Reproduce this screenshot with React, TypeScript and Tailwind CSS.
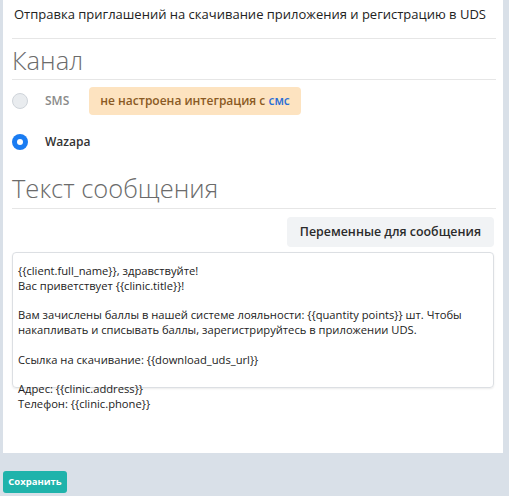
import React, { useState } from 'react';

const messageText = `{{client.full_name}}, здравствуйте!
Вас приветствует {{clinic.title}}!

Вам зачислены баллы в нашей системе лояльности: {{quantity points}} шт. Чтобы накапливать и списывать баллы, зарегистрируйтесь в приложении UDS.

Ссылка на скачивание: {{download_uds_url}}

Адрес: {{clinic.address}}
Телефон: {{clinic.phone}}`;

function Radio({ checked }: { checked: boolean }) {
  return checked ? (
    <span className="w-4 h-4 rounded-full bg-[#1a7cf2] flex items-center justify-center">
      <span className="w-[6px] h-[6px] rounded-full bg-white" />
    </span>
  ) : (
    <span className="w-4 h-4 rounded-full bg-[#e9ecef] border border-[#cfd4da]" />
  );
}

export default function App() {
  const [channel, setChannel] = useState<'sms' | 'wazapa'>('wazapa');

  return (
    <div className="w-[509px] h-[496px] bg-[#d9e0e8] font-['Open_Sans',sans-serif] overflow-hidden">
      {/* Panel */}
      <div className="ml-[3px] w-[500px] h-[453px] bg-white pl-[9px] pr-[7px]">
        <div className="pt-[5px] pl-[2px] text-[13px] leading-[18px] text-[#222]">
          Отправка приглашений на скачивание приложения и регистрацию в UDS
        </div>
        <div className="mt-[15px] border-t border-[#e6e6e6]" />

        <h2 className="mt-[5px] text-[25.5px] leading-[32px] font-light text-[#6b6b6b]">Канал</h2>
        <div className="mt-[3px] border-t border-[#e6e6e6]" />

        {/* Channels */}
        <div className="mt-[7px] flex items-center h-[28px]">
          <button onClick={() => setChannel('sms')} className="flex items-center">
            <Radio checked={channel === 'sms'} />
            <span className="ml-[17px] text-[12px] font-semibold text-[#8a8a8a]">SMS</span>
          </button>
          <div className="ml-[20px] h-[28px] px-[11px] rounded-[4px] bg-[#fde3c0] flex items-center text-[12px] font-semibold text-[#8a5a24]">
            не настроена интеграция с&nbsp;<span className="text-[#2a6fd6]">смс</span>
          </div>
        </div>
        <div className="mt-[19px] flex items-center h-[16px]">
          <button onClick={() => setChannel('wazapa')} className="flex items-center">
            <Radio checked={channel === 'wazapa'} />
            <span className="ml-[17px] text-[12px] font-semibold text-[#333]">Wazapa</span>
          </button>
        </div>

        <h2 className="mt-[22px] text-[25.5px] leading-[32px] font-light text-[#6b6b6b]">Текст сообщения</h2>
        <div className="mt-[4px] border-t border-[#e6e6e6]" />

        <div className="mt-[8px] flex justify-end pr-[2px]">
          <button className="h-[30px] px-[13px] rounded-[4px] bg-[#f1f3f5] text-[12.4px] font-semibold text-[#2b2b2b]">
            Переменные для сообщения
          </button>
        </div>

        <div className="mt-[5px] mr-[2px] h-[136px] rounded-[4px] border border-[#dcdfe3] shadow-[0_1px_2px_rgba(0,0,0,0.08)]">
          <div className="pt-[11px] px-[5px] whitespace-pre-wrap text-[11.2px] leading-[14.75px] text-[#222]">
            {messageText}
          </div>
        </div>
      </div>

      <button className="mt-[18px] ml-[3px] w-[64px] h-[22px] rounded-[3px] bg-[#1fb3ab] text-white text-[9.5px] font-bold">
        Сохранить
      </button>
    </div>
  );
}
